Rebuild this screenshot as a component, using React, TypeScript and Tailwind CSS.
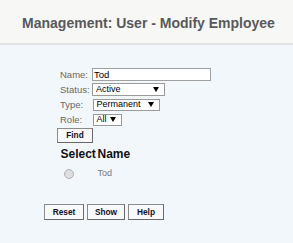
import React from "react";

const Tri = () => (
  <svg width="6" height="5" viewBox="0 0 6 5" className="block">
    <polygon points="0,0 6,0 3,5" fill="#000" />
  </svg>
);

const Sel = ({ w, text, h = "h-[13px]" }: { w: string; text: string; h?: string }) => (
  <div className={`${w} ${h} border border-[#9a9a9a] bg-white flex items-center justify-between pl-[3px] pr-[5px]`}>
    <span className="text-[9px] leading-none text-black">{text}</span>
    <Tri />
  </div>
);

const Btn = ({ w, children }: { w: string; children: React.ReactNode }) => (
  <div
    className={`${w} h-[16px] border border-[#8a8a8a] border-b-[#6a6a6a] border-r-[#6a6a6a] bg-[#f9f9f9] flex items-center justify-center text-[8.3px] font-bold text-[#101028] leading-none`}
  >
    {children}
  </div>
);

export default function App() {
  return (
    <div
      className="w-full h-[243px] bg-[#f2f7fc]"
      style={{ fontFamily: '"Liberation Sans", Arial, sans-serif' }}
    >
      <div className="h-[45px] bg-[#f7f7f6] border-b-2 border-[#e3e3e3] flex items-center justify-center pt-[3px] pl-[4px]">
        <span className="text-[14px] leading-[16px] font-bold text-[#58595b]">
          Management: User - Modify Employee
        </span>
      </div>

      <div className="pt-[22px] pl-[57px]">
        <div className="grid grid-cols-[35px_auto] auto-rows-[15px] items-center">
          <span className="pl-[3px] text-[9.5px] text-[#6d675e] leading-none">Name:</span>
          <div className="w-[119px] h-[13px] border border-[#a0a0a0] bg-white flex items-center pl-[1px]">
            <span className="text-[9.5px] leading-none text-black">Tod</span>
          </div>
          <span className="pl-[3px] text-[9.5px] text-[#6d675e] leading-none">Status:</span>
          <Sel w="w-[73px]" text="Active" />
          <span className="pl-[3px] text-[9.5px] text-[#6d675e] leading-none">Type:</span>
          <div className="pl-[0.5px]">
            <Sel w="w-[67px]" text="Permanent" h="h-[12px]" />
          </div>
          <span className="pl-[3px] text-[9.5px] text-[#6d675e] leading-none">Role:</span>
          <div className="pl-[0.5px]">
            <Sel w="w-[29px]" text="All" h="h-[12px]" />
          </div>
        </div>
        <div className="mt-[1px] w-[36px] h-[15px] border border-[#8a8a8a] border-b-[#6a6a6a] border-r-[#6a6a6a] bg-[#f9f9f9] flex items-center justify-center text-[8.3px] font-bold text-[#101028] leading-none">
          Find
        </div>

        <div className="mt-[4px] pl-[3.5px] grid grid-cols-[37px_auto]">
          <span className="text-[12px] leading-[14px] font-bold text-[#111]">Select</span>
          <span className="text-[12px] leading-[14px] font-bold text-[#111]">Name</span>
          <div className="h-[22px] flex items-center">
            <div className="ml-[3.5px] mt-[4px] w-[10px] h-[10px] rounded-full border border-[#b0b0b0] bg-[#dedede]" />
          </div>
          <div className="h-[22px] flex items-center">
            <span className="mt-[2px] text-[9px] leading-none text-[#7a7a7a]">Tod</span>
          </div>
        </div>
      </div>

      <div className="mt-[21px] ml-[44px] flex gap-[3px]">
        <Btn w="w-[40px]">Reset</Btn>
        <Btn w="w-[38px]">Show</Btn>
        <Btn w="w-[36px]">Help</Btn>
      </div>
    </div>
  );
}
